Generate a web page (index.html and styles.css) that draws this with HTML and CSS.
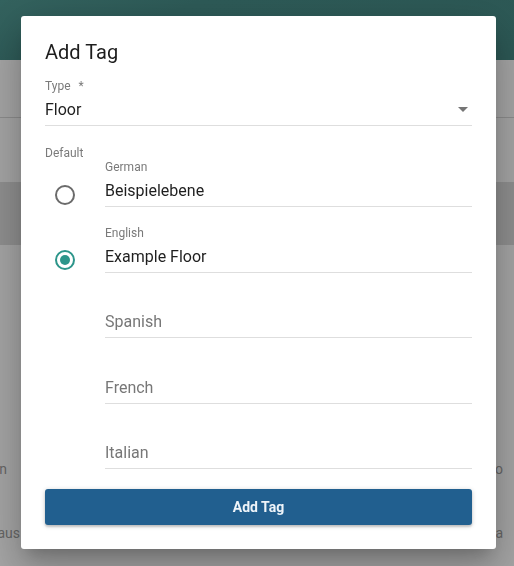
FILE: index.html
```html
<!DOCTYPE html>
<html lang="en">
<head>
  <meta charset="UTF-8" />
  <meta name="viewport" content="width=device-width, initial-scale=1" />
  <title>Add Tag</title>
  <link rel="stylesheet" href="styles.css">
</head>
<body>
  <!-- page behind the dialog -->
  <div class="page">
    <header class="topbar"></header>
    <div class="toolbar"></div>
    <div class="band"></div>
    <div class="list">
      <div class="list-row">
        <span class="cell-left narrow"><span>Ebenen</span></span>
        <span class="cell-right">Büro</span>
      </div>
      <div class="list-row">
        <span class="cell-left"><span>Haus</span></span>
        <span class="cell-right">Ja</span>
      </div>
    </div>
  </div>

  <div class="overlay">
    <form class="dialog">
      <h2 class="dialog-title">Add Tag</h2>

      <div class="field">
        <label class="field-label">Type<span class="required">*</span></label>
        <div class="field-input select">
          <span>Floor</span>
          <svg class="arrow" width="10" height="5" viewBox="0 0 10 5"><path d="M0 0h10L5 5z" fill="#757575"/></svg>
        </div>
      </div>

      <div class="default-label">Default</div>

      <div class="lang-list">
        <div class="lang-row">
          <span class="radio"></span>
          <div class="field">
            <label class="field-label">German</label>
            <input class="field-input" type="text" value="Beispielebene" />
          </div>
        </div>
        <div class="lang-row">
          <span class="radio checked"></span>
          <div class="field">
            <label class="field-label">English</label>
            <input class="field-input" type="text" value="Example Floor" />
          </div>
        </div>
        <div class="lang-row">
          <span></span>
          <div class="field">
            <label class="field-label"></label>
            <input class="field-input" type="text" placeholder="Spanish" />
          </div>
        </div>
        <div class="lang-row">
          <span></span>
          <div class="field">
            <label class="field-label"></label>
            <input class="field-input" type="text" placeholder="French" />
          </div>
        </div>
        <div class="lang-row">
          <span></span>
          <div class="field">
            <label class="field-label"></label>
            <input class="field-input" type="text" placeholder="Italian" />
          </div>
        </div>
      </div>

      <button type="submit" class="submit">Add Tag</button>
    </form>
  </div>
</body>
</html>
```

FILE: styles.css
```css
/* Reset & base */
* {
  box-sizing: border-box;
}
body {
  margin: 0;
  font-family: Roboto, 'Liberation Sans', sans-serif;
  background: #a6a6a6;
  overflow: hidden;
}

/* Page behind the backdrop */
.page {
  height: 566px;
  background: #a6a6a6;
}
.topbar {
  height: 60px;
  background: linear-gradient(160deg, #34635f 0%, #2e5b58 30%, #2d5956 100%);
}
.toolbar {
  height: 58px;
  border-bottom: 1px solid #8d8d8d;
}
.band {
  margin-top: 64px;
  height: 63px;
  background: #909090;
}
.list {
  margin-top: 192px;
}
.list-row {
  height: 64px;
  display: flex;
  align-items: center;
  justify-content: space-between;
  font-size: 14px;
  color: #676767;
}
.cell-left {
  width: 20px;
  display: flex;
  justify-content: flex-end;
  white-space: nowrap;
}
.cell-left.narrow {
  width: 7px;
}
.cell-right {
  width: 20px;
  white-space: nowrap;
  display: flex;
  justify-content: flex-end;
  margin-right: 11px;
}

/* Dialog */
.overlay {
  position: fixed;
  inset: 0;
  display: flex;
  align-items: flex-start;
  justify-content: center;
  padding: 16px 0 0 3px;
}
.dialog {
  width: 475px;
  background: white;
  border-radius: 3px;
  padding: 24px;
  display: flex;
  flex-direction: column;
  box-shadow: 0 11px 15px -7px rgba(0, 0, 0, 0.2),
              0 24px 38px 3px rgba(0, 0, 0, 0.14),
              0 9px 46px 8px rgba(0, 0, 0, 0.12);
}
.dialog-title {
  margin: 0 0 15px;
  font-size: 20px;
  line-height: 24px;
  font-weight: 400;
  color: #1d1d1d;
}

/* Text fields */
.field {
  display: flex;
  flex-direction: column;
  border-bottom: 1px solid #dedede;
}
.field-label {
  display: block;
  height: 14px;
  font-size: 12px;
  line-height: 14px;
  color: #7a7a7a;
}
.required {
  margin-left: 8px;
}
.field-input {
  height: 32px;
  padding: 7px 0 6px;
  border: none;
  outline: none;
  margin: 0;
  font-family: inherit;
  font-size: 16px;
  line-height: 19px;
  color: #1f1f1f;
  background: transparent;
  width: 100%;
}
.field-input::placeholder {
  color: #777;
}
.select {
  display: flex;
  align-items: center;
  justify-content: space-between;
}
.arrow {
  margin-right: 4px;
}

.default-label {
  margin-top: 21px;
  height: 13px;
  font-size: 12px;
  line-height: 13px;
  color: #7a7a7a;
}

/* Language rows */
.lang-list {
  display: flex;
  flex-direction: column;
  gap: 18.5px;
}
.lang-row {
  display: grid;
  grid-template-columns: 60px 1fr;
  align-items: start;
}
.radio {
  width: 20px;
  height: 20px;
  margin: 24.5px 0 0 10px;
  border: 2px solid #6b6b6b;
  border-radius: 50%;
  display: flex;
  align-items: center;
  justify-content: center;
}
.radio.checked {
  border-color: #2c958a;
}
.radio.checked::after {
  content: "";
  width: 10px;
  height: 10px;
  border-radius: 50%;
  background: #2c958a;
}

/* Submit button */
.submit {
  margin-top: 20px;
  height: 36px;
  border: none;
  border-radius: 3px;
  background: #215f8f;
  color: #eef4f9;
  font-family: inherit;
  font-size: 14px;
  font-weight: 700;
  cursor: pointer;
  box-shadow: 0 1px 5px rgba(0, 0, 0, 0.2), 0 2px 2px rgba(0, 0, 0, 0.14);
}
```
